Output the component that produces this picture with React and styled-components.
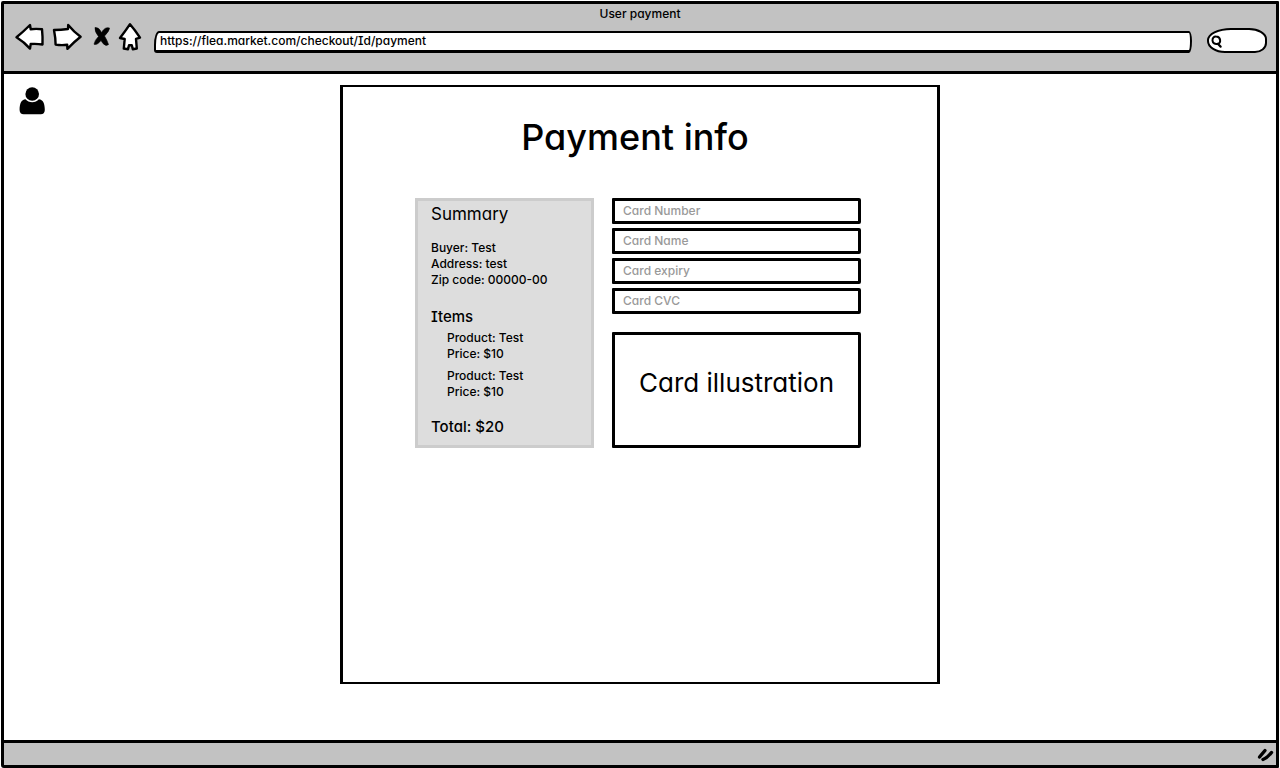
import React from "react";
import styled, { createGlobalStyle } from "styled-components";

const GlobalStyle = createGlobalStyle`
  *, *::before, *::after { box-sizing: border-box; }
  body {
    margin: 0;
    background: #fff;
    color: #000;
    font-family: Inter, "Liberation Sans", sans-serif;
    font-size: 12px;
    font-weight: 500;
    line-height: 16px;
    font-feature-settings: "cv11" 1, "cv08" 1;
  }
  h1, h2, p, ul { margin: 0; padding: 0; font-weight: inherit; }
  ul { list-style: none; }
  button, input { font: inherit; color: inherit; font-feature-settings: inherit; }
`;

const Window = styled.div`
  display: flex;
  flex-direction: column;
  min-height: calc(100vh - 2px);
  margin: 1px;
  border: 3px solid #000;
  border-radius: 2px 1px 1px 3px;
`;

const BrowserBar = styled.header`
  height: 70px;
  padding-top: 2px;
  background: #c2c2c2;
  border-bottom: 3px solid #000;
`;

const WindowTitle = styled.p`
  text-align: center;
`;

const Toolbar = styled.div`
  display: flex;
  align-items: flex-start;
  padding: 0 9px 0 10px;
`;

const NavGroup = styled.nav`
  display: flex;
  margin-right: 10px;
`;

const NavButton = styled.button`
  display: flex;
  padding: 0;
  border: 0;
  background: none;
`;

const AddressInput = styled.input`
  flex: 1;
  min-width: 0;
  height: 22px;
  padding: 0 4px 2px;
  margin-top: 9px;
  background: #fff;
  border: 2px solid #000;
  border-bottom-width: 3px;
  border-radius: 5px 3px 3px 3px / 14px 10px 12px 3px;
`;

const SearchBox = styled.label`
  display: flex;
  align-items: center;
  width: 60px;
  height: 25px;
  margin: 6px 0 0 15px;
  padding-left: 2px;
  background: #fff;
  border: 2px solid #000;
  border-radius: 24px 18px 12px 18px / 12px 11px 10px 12px;
`;

const SearchIcon = styled.svg`
  flex: none;
`;

const SearchInput = styled.input`
  flex: 1;
  min-width: 0;
  padding: 0;
  border: 0;
  outline: 0;
  background: none;
`;

const Page = styled.main`
  flex: 1;
  display: grid;
  grid-template-columns: 1fr minmax(0, 600px) 1fr;
  align-items: start;
  padding: 11px 0 56px;
`;

const AccountButton = styled.button`
  display: flex;
  justify-self: start;
  margin-left: 14px;
  padding: 0;
  border: 0;
  background: none;
`;

const Checkout = styled.section`
  min-height: 599px;
  padding: 26px 76px 40px 72px;
  border: 2px solid #000;
  border-left-width: 3px;
  border-right-width: 3px;
`;

const Heading = styled.h1`
  font-size: 36px;
  line-height: 48px;
  text-align: center;
  padding-right: 6px;
`;

const Columns = styled.div`
  display: flex;
  gap: 18px;
  margin-top: 37px;
`;

const Summary = styled.aside`
  flex: 0 1 179px;
  padding: 3px 12px 7px 13px;
  background: #ddd;
  border: 3px solid #ccc;
`;

const SummaryHeading = styled.h2`
  font-size: ${(p) => (p.$large ? 17 : 15)}px;
  font-weight: ${(p) => (p.$large ? 400 : 500)};
  line-height: 20px;
`;

const Buyer = styled.div`
  margin: 16px 0 19px;
`;

const Items = styled.ul`
  display: grid;
  gap: 6px;
  margin: 3px 0 17px;
  padding-left: 16px;
`;

const PaymentForm = styled.form`
  flex: 1;
  display: flex;
  flex-direction: column;
  gap: 4px;
  min-width: 0;
`;

const CardField = styled.input`
  width: 100%;
  height: 26px;
  padding: 0 8px 2px;
  background: #fff;
  border: 3px solid #000;
  border-radius: 1px 2px 2px 1px;
  &::placeholder { color: #999; opacity: 1; }
`;

const CardIllustration = styled.div`
  display: flex;
  align-items: center;
  justify-content: center;
  height: 116px;
  margin-top: 14px;
  padding-bottom: 14px;
  border: 3px solid #000;
  border-radius: 1px 2px 2px 1px;
  font-size: 26px;
  font-weight: 400;
  line-height: 32px;
`;

const StatusBar = styled.footer`
  display: flex;
  align-items: center;
  justify-content: flex-end;
  height: 25px;
  padding-right: 1px;
  background: #c2c2c2;
  border-top: 3px solid #000;
`;

const navIcons = [
  { label: "Back", x: 14, w: 34, d: "M16.5 37.3Q23 32 30 25L30.7 29.2Q36 28.6 42 29.2Q42.8 37 42.5 44.5Q37 43.6 30.7 44L30 48.6Q24 42 16.5 37.3Z" },
  { label: "Forward", x: 48, w: 42, d: "M54 30Q61 30 68 29L68.2 25Q74 32 80.6 36.8Q74 42 67.4 48.8L67.2 44.8Q61 45.5 55.6 44.6Q55.6 38 54 30Z" },
  { label: "Stop", x: 90, w: 26, solid: true, d: "M95 27.5Q99 27 101.5 32.5Q105 26.5 109.5 28Q109.5 31 104.5 36Q107 40 108.5 44.5Q106 46.8 103 43.5L101 40.5Q97 45.5 94 44.2Q94.5 40.5 98.5 36.5Q94.5 31.5 95 27.5Z" },
  { label: "Home", x: 116, w: 28, d: "M130 24.2Q135 30 140 37.6L136 38.8L136.8 48.5L132.8 49.2L131.8 45.2H129L128 49.2L123.8 48.5L124.7 39L120 38Q125.5 31 130 24.2Z" },
];

const fields = [
  { name: "number", label: "Card Number" },
  { name: "holder", label: "Card Name" },
  { name: "expiry", label: "Card expiry" },
  { name: "cvc", label: "Card CVC" },
];

const products = [
  { id: 1, name: "Test", price: "$10" },
  { id: 2, name: "Test", price: "$10" },
];

export default function App() {
  return (
    <>
      <GlobalStyle />
      <Window>
        <BrowserBar>
          <WindowTitle>User payment</WindowTitle>
          <Toolbar>
            <NavGroup aria-label="Browser">
              {navIcons.map(({ label, x, w, d, solid }) => (
                <NavButton key={label} type="button" aria-label={label}>
                  <svg width={w} height="32" viewBox={`${x} 22 ${w} 32`} aria-hidden="true">
                    <path d={d} fill={solid ? "#000" : "#fff"} stroke="#000" strokeWidth={solid ? 0.6 : 2.4} strokeLinejoin="round" />
                  </svg>
                </NavButton>
              ))}
            </NavGroup>
            <AddressInput aria-label="Address" type="url" defaultValue="https://flea.market.com/checkout/Id/payment" />
            <SearchBox>
              <SearchIcon width="12" height="14" viewBox="0 0 12 14" fill="none" stroke="#000" aria-hidden="true">
                <path d="M5.2 2.6C2.6 2.4 1.4 4.4 1.5 6.6C1.8 9.2 4 10.4 6.2 10C8.6 9.6 9.4 8 9.1 6C8.8 3.8 7.4 2.7 5.2 2.6Z" strokeWidth="2" />
                <path d="M6.8 9.8L9.6 12.6" strokeWidth="2.2" strokeLinecap="round" />
              </SearchIcon>
              <SearchInput type="text" aria-label="Search" />
            </SearchBox>
          </Toolbar>
        </BrowserBar>
        <Page>
          <AccountButton type="button" aria-label="Account">
            <svg width="28" height="30" viewBox="0 0 28 30" aria-hidden="true">
              <circle cx="14.2" cy="9" r="6.8" />
              <path d="M7.5 14.2C9.2 16 11.5 17.2 14.2 17.2S19.2 16 20.9 14.2C25 14.5 26.8 18.5 26.8 25C26.8 27.8 25.2 29.2 22.8 29.2H5.6C3.2 29.2 1.6 27.8 1.6 25C1.6 18.5 3.4 14.5 7.5 14.2Z" />
            </svg>
          </AccountButton>
          <Checkout>
            <Heading>Payment info</Heading>
            <Columns>
              <Summary>
                <SummaryHeading $large>Summary</SummaryHeading>
                <Buyer>
                  <p>Buyer: Test</p>
                  <p>Address: test</p>
                  <p>Zip code: 00000-00</p>
                </Buyer>
                <SummaryHeading>Items</SummaryHeading>
                <Items>
                  {products.map((item) => (
                    <li key={item.id}>
                      <p>Product: {item.name}</p>
                      <p>Price: {item.price}</p>
                    </li>
                  ))}
                </Items>
                <SummaryHeading as="p">Total: $20</SummaryHeading>
              </Summary>
              <PaymentForm>
                {fields.map(({ name, label }) => (
                  <CardField key={name} name={name} aria-label={label} placeholder={label} />
                ))}
                <CardIllustration>Card illustration</CardIllustration>
              </PaymentForm>
            </Columns>
          </Checkout>
        </Page>
        <StatusBar>
          <svg width="18" height="16" viewBox="0 0 18 16" fill="none" stroke="#000" strokeLinecap="round" aria-hidden="true">
            <path d="M2.5 11L8 4.5" strokeWidth="3.4" />
            <path d="M6 13.5Q10 12 14.5 6.5" strokeWidth="3.4" />
          </svg>
        </StatusBar>
      </Window>
    </>
  );
}
